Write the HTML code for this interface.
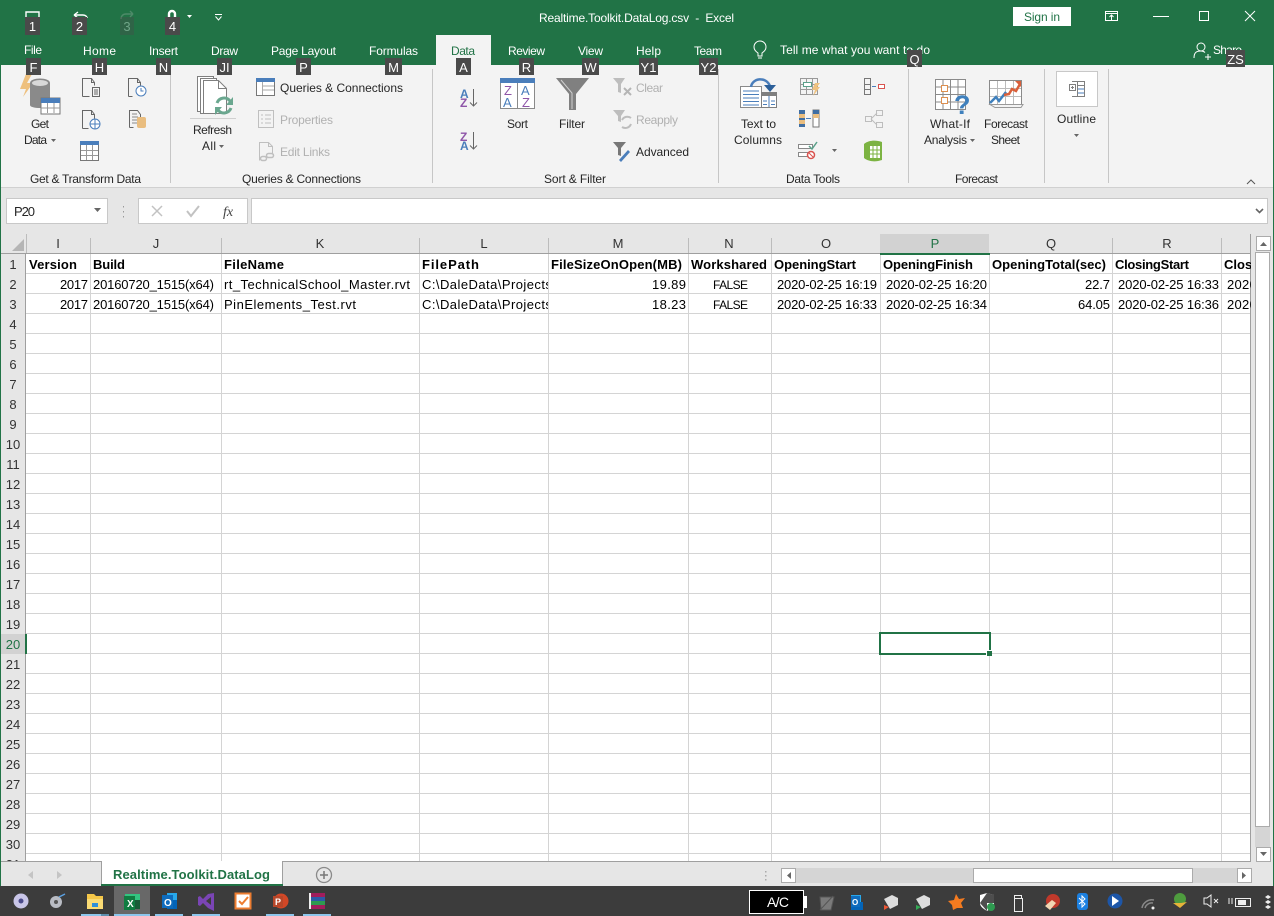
<!DOCTYPE html>
<html><head><meta charset="utf-8"><title>Realtime.Toolkit.DataLog.csv - Excel</title>
<style>
html,body{margin:0;padding:0;background:#fff;width:1274px;height:916px;overflow:hidden}
svg{display:block}
text{font-family:"Liberation Sans",sans-serif;font-size:12px;fill:#262626;white-space:pre}
.w text,text.w{fill:#fff}
.g text,text.g{fill:#b1b1b1}
.kt rect{fill:#4a4a4a}
.kt text{fill:#fff;font-size:13px;text-anchor:middle}
.c text{font-size:13px;fill:#000}
.c text.b{font-weight:bold}
.h text{font-size:13px;fill:#333;text-anchor:middle}
.r text{font-size:13px;fill:#333;text-anchor:middle}
.s{fill:none;stroke:#666;stroke-width:1}
</style></head><body>
<svg width="1274" height="916" viewBox="0 0 1274 916" xmlns="http://www.w3.org/2000/svg">
<defs>
<clipPath id="cL"><rect x="421" y="254" width="127" height="60"/></clipPath>
<clipPath id="cS"><rect x="1222" y="254" width="29" height="60"/></clipPath>
</defs>
<!-- backgrounds -->
<rect width="1274" height="916" fill="#e6e6e6"/>
<rect width="1274" height="65" fill="#217346"/>
<rect x="1" y="65" width="1272" height="122" fill="#f3f3f3"/>
<rect x="0" y="187" width="1274" height="1" fill="#d0d0d0"/>
<rect x="0" y="65" width="1" height="821" fill="#217346"/>
<rect x="1273" y="65" width="1" height="821" fill="#217346"/>
<rect x="436" y="35" width="55" height="31" fill="#f3f3f3"/>

<!-- QAT -->
<g fill="none" stroke="#fff" stroke-width="1.4">
<path d="M26 17V12H39V17"/>
<path d="M74 15l4-3M74 15l4 3M74 15h9c3 0 4 2 4 3"/>
<path d="M133 14l-3-3M133 14l-3 3M133 14h-7c-3 0-5 2-5 5" stroke="#4d8a68"/>
<path d="M169 17v-3a3 3 0 0 1 6 0v3" stroke-width="2.4"/>
</g>
<path d="M187 15h5l-2.500 3z" fill="#fff"/>
<path d="M215 14.500h7M215.500 16.500l3 3.500 3-3.500" fill="none" stroke="#fff"/>

<!-- title -->
<text class="w" x="539" y="22" textLength="195" lengthAdjust="spacing">Realtime.Toolkit.DataLog.csv  -  Excel</text>
<rect x="1013" y="7" width="58" height="19" fill="#fff"/>
<text x="1024" y="21" textLength="36" lengthAdjust="spacing" style="fill:#217346">Sign in</text>
<g fill="none" stroke="#fff">
<rect x="1105.500" y="11.500" width="12" height="9"/>
<path d="M1105 13.500h13M1111.500 20v-5M1109.500 17l2-2 2 2"/>
<path d="M1199.500 11.500h9v9h-9z"/>
<path d="M1245 11l10 10M1255 11l-10 10"/>
<circle cx="1201" cy="47" r="4"/>
<path d="M1194 58c0-6 3-7 7-7 2 0 3 .5 4 1.500M1205 57h6M1208 54v6"/>
</g>
<rect x="1153" y="16" width="16" height="1" fill="#fff"/>

<!-- tabs -->
<g class="w">
<text x="24" y="54" textLength="18" lengthAdjust="spacing">File</text>
<text x="83" y="55" textLength="33" lengthAdjust="spacing">Home</text>
<text x="149" y="55" textLength="29" lengthAdjust="spacing">Insert</text>
<text x="211" y="55" textLength="27" lengthAdjust="spacing">Draw</text>
<text x="271" y="55" textLength="65" lengthAdjust="spacing">Page Layout</text>
<text x="369" y="55" textLength="49" lengthAdjust="spacing">Formulas</text>
<text x="508" y="55" textLength="37" lengthAdjust="spacing">Review</text>
<text x="578" y="55" textLength="25" lengthAdjust="spacing">View</text>
<text x="636" y="55" textLength="25" lengthAdjust="spacing">Help</text>
<text x="694" y="55" textLength="28" lengthAdjust="spacing">Team</text>
<text x="780" y="54" textLength="150" lengthAdjust="spacing">Tell me what you want to do</text>
<text x="1213" y="54" textLength="29" lengthAdjust="spacing">Share</text>
</g>
<text x="451" y="55" textLength="24" lengthAdjust="spacing" style="fill:#217346">Data</text>
<g fill="none" stroke="#fff">
<path d="M758 53c-3-2-4-4-4-6a6 6 0 0 1 12 0c0 2-1 4-4 6v3h-4zM758 58h4"/>
</g>

<!-- separators -->
<g fill="#c6c6c6">
<rect x="170" y="69" width="1" height="114"/><rect x="432" y="69" width="1" height="114"/>
<rect x="718" y="69" width="1" height="114"/><rect x="908" y="69" width="1" height="114"/>
<rect x="1044" y="69" width="1" height="114"/><rect x="1108" y="69" width="1" height="114"/>
<rect x="190" y="118" width="46" height="1" fill="#d0d0d0"/>
</g>

<!-- Get data icon -->
<path d="M32 74h-6l-6 15h6l-3 8 10-14h-6z" fill="#eec07e"/>
<path d="M30 83c0-6 20-6 20 0v22c0 4-20 4-20 0z" fill="#8a8a8a"/>
<ellipse cx="40" cy="83" rx="8" ry="3" fill="#d8d8d8"/>
<rect x="41" y="98" width="19" height="16" fill="#fff" stroke="#777"/>
<rect x="41" y="98" width="19" height="5" fill="#4a7ebb"/>
<path d="M41 108h19M47.500 103v10M54 103v10" stroke="#999" fill="none"/>
<!-- small doc icons -->
<g class="s">
<path d="M82.500 96.500v-18h9l3 4v3M82.500 96.500h7M91.500 78.500v4h3"/>
<rect x="92.500" y="87.500" width="7" height="9"/><path d="M94 90h4M94 92h4M94 94h4"/>
<path d="M128.500 96.500v-18h9l3 4v3M128.500 96.500h4M137.500 78.500v4h3"/>
<path d="M82.500 128.500v-18h9l3 4v4M82.500 128.500h6M91.500 110.500v4h3"/>
<path d="M129.500 127.500v-17h8l3 4v3M129.500 127.500h4"/>
<path d="M132 114h5M132 117h6M132 120h5M132 123h5" stroke="#888"/>
</g>
<circle cx="141" cy="91" r="5" fill="#fff" stroke="#4a7ebb"/><path d="M141 88V91h2.500" fill="none" stroke="#4a7ebb"/>
<circle cx="95" cy="124" r="5" fill="#fff" stroke="#4a7ebb"/><path d="M90 124h10M95 119v10" stroke="#4a7ebb"/>
<rect x="137" y="117" width="9" height="11" rx="2" fill="#e9bd7f"/>
<rect x="80.500" y="141.500" width="18" height="19" fill="#fff" stroke="#777"/>
<rect x="80" y="141" width="19" height="4" fill="#4a7ebb"/>
<path d="M81 150.500h17M81 155.500h17M86.500 145v15M92.500 145v15" stroke="#999" fill="none"/>

<!-- Refresh -->
<g fill="#fff" stroke="#7f7f7f">
<path d="M197.500 76.500h16v35h-16z"/><path d="M200.500 78.500h16v35h-16z"/>
<path d="M203.500 80.500h15l8 8v25h-23z"/>
</g>
<path d="M218.500 80.500v8h8" fill="none" stroke="#7f7f7f"/>
<g fill="none" stroke="#6aa78f" stroke-width="3"><path d="M217 103a7.500 7.500 0 0 1 13-2"/><path d="M231 108a7.500 7.500 0 0 1-13 2"/></g>
<path d="M233 97v8h-7zM215 115v-8h7z" fill="#6aa78f"/>
<text x="193" y="134" textLength="39" lengthAdjust="spacing">Refresh</text>
<text x="202" y="150" textLength="14" lengthAdjust="spacing">All</text>

<!-- queries icon -->
<rect x="256.500" y="78.500" width="18" height="17" fill="#fff" stroke="#777"/>
<rect x="256" y="78" width="19" height="4" fill="#4a7ebb"/>
<path d="M262.500 82v13M263 86h11M263 90h11" stroke="#aaa" fill="none"/>
<g fill="none" stroke="#bfbfbf">
<rect x="258.500" y="110.500" width="15" height="17"/><path d="M261 115h2M265 115h6M261 119h2M265 119h6M261 123h2M265 123h6"/>
<path d="M259.500 160.500v-18h9l4 4v8"/><path d="M268.500 142.500v4h4"/>
<rect x="260.500" y="156.500" width="6" height="4" rx="2" stroke-width="1.500"/><rect x="266.500" y="153.500" width="7" height="4" rx="2" stroke-width="1.500"/>
</g>
<text x="280" y="92" textLength="123" lengthAdjust="spacing">Queries &amp; Connections</text>
<g class="g">
<text x="280" y="124" textLength="53" lengthAdjust="spacing">Properties</text>
<text x="280" y="156" textLength="50" lengthAdjust="spacing">Edit Links</text>
<text x="636" y="92" textLength="27" lengthAdjust="spacing">Clear</text>
<text x="636" y="124" textLength="42" lengthAdjust="spacing">Reapply</text>
</g>

<!-- ribbon labels -->
<text x="31" y="128" textLength="18" lengthAdjust="spacing">Get</text>
<text x="24" y="144" textLength="23" lengthAdjust="spacing">Data</text>
<text x="507" y="128" textLength="21" lengthAdjust="spacing">Sort</text>
<text x="559" y="128" textLength="26" lengthAdjust="spacing">Filter</text>
<text x="636" y="156" textLength="53" lengthAdjust="spacing">Advanced</text>
<text x="741" y="128" textLength="35" lengthAdjust="spacing">Text to</text>
<text x="734" y="144" textLength="48" lengthAdjust="spacing">Columns</text>
<text x="930" y="128" textLength="40" lengthAdjust="spacing">What-If</text>
<text x="924" y="144" textLength="43" lengthAdjust="spacing">Analysis</text>
<text x="984" y="128" textLength="44" lengthAdjust="spacing">Forecast</text>
<text x="991" y="144" textLength="29" lengthAdjust="spacing">Sheet</text>
<text x="1057" y="123" textLength="39" lengthAdjust="spacing">Outline</text>
<g fill="#444">
<text x="30" y="183" textLength="111" lengthAdjust="spacing">Get &amp; Transform Data</text>
<text x="242" y="183" textLength="119" lengthAdjust="spacing">Queries &amp; Connections</text>
<text x="544" y="183" textLength="62" lengthAdjust="spacing">Sort &amp; Filter</text>
<text x="786" y="183" textLength="54" lengthAdjust="spacing">Data Tools</text>
<text x="955" y="183" textLength="43" lengthAdjust="spacing">Forecast</text>
</g>
<g fill="#666">
<path d="M51 139h5l-2.500 3zM219 145h5l-2.500 3zM970 139h5l-2.500 3zM1074 134h5l-2.500 3zM832 149h5l-2.500 3z"/>
</g>

<!-- Sort A-Z icons -->
<text x="460" y="98" style="font-size:12px;fill:#4a7ebb;font-weight:bold">A</text>
<text x="460" y="107" style="font-size:12px;fill:#8e55a8;font-weight:bold">Z</text>
<text x="460" y="141" style="font-size:12px;fill:#8e55a8;font-weight:bold">Z</text>
<text x="460" y="150" style="font-size:12px;fill:#4a7ebb;font-weight:bold">A</text>
<path d="M473.500 89v17M470 102.500l3.500 3.500 3.500-3.500M473.500 132v17M470 145.500l3.500 3.500 3.500-3.500" fill="none" stroke="#666"/>
<rect x="500.500" y="78.500" width="34" height="30" fill="#fff" stroke="#8a8a8a"/>
<rect x="500" y="78" width="35" height="5" fill="#4a7ebb"/>
<rect x="517" y="83" width="1" height="25" fill="#8a8a8a"/>
<text x="504" y="95" style="font-size:13px;fill:#8e55a8">Z</text><text x="503" y="107" style="font-size:13px;fill:#4a7ebb">A</text>
<text x="521" y="95" style="font-size:13px;fill:#4a7ebb">A</text><text x="522" y="107" style="font-size:13px;fill:#8e55a8">Z</text>
<!-- Filter -->
<path d="M556 78h33l-13 16v16h-7V94z" fill="#808080"/>
<path d="M561 80l11 13v16" fill="none" stroke="#d0d0d0"/>
<path d="M613 78h12l-4 6v9l-3-1v-8z" fill="#bdbdbd"/>
<path d="M624 88l7 7M631 88l-7 7" stroke="#b5b5b5" stroke-width="2"/>
<path d="M613 110h12l-4 6v6l-3-1v-5z" fill="#bdbdbd"/>
<path d="M622 120a6 6 0 0 1 9-2M631 124a6 6 0 0 1-9 3" fill="none" stroke="#bdbdbd" stroke-width="2"/>
<path d="M613 142h13l-5 6v8l-3-1v-7z" fill="#777"/>
<path d="M619 160l9-10 2 2-9 10z" fill="#4a7ebb"/>

<!-- text to columns -->
<rect x="740.500" y="86.500" width="21" height="21" fill="#fff" stroke="#8a8a8a"/>
<path d="M743 91h16M743 94.500h16M743 98h16M743 101.500h16M743 105h16" stroke="#4a7ebb"/>
<rect x="761.500" y="92.500" width="15" height="15" fill="#fff" stroke="#7f7f7f"/>
<rect x="761" y="92" width="16" height="4" fill="#7f7f7f"/>
<path d="M769 96v11M763 101h4M771 101h4M763 104.500h4M771 104.500h4" stroke="#4a7ebb"/>
<path d="M751 87c1-9 15-11 19-1" fill="none" stroke="#4a7ebb" stroke-width="2.500"/>
<path d="M764 85l6 7 6-7z" fill="#2b5f99"/>
<!-- data tools -->
<g fill="none" stroke="#999">
<path d="M800.500 78.500h17v16h-17zM800.500 84.500h17M800.500 89.500h17M806.500 78.500v16M812.500 78.500v16"/>
</g>
<rect x="803.500" y="82.500" width="8" height="4" fill="#fff" stroke="#5aa08a"/>
<path d="M815 83h5l-3 4h3l-7 9 2-6h-3z" fill="#efc27f"/>
<rect x="799" y="110" width="6" height="17" fill="#e9bd7f"/><path d="M799 110h6v4h-6zM799 118h6v2h-6zM799 124h6v3h-6z" fill="#3f6ea3"/>
<rect x="813" y="110" width="6" height="17" fill="#fff" stroke="#777"/><path d="M813 110h6v4h-6z" fill="#3f6ea3"/><path d="M813 114h6v4h-6z" fill="#e9bd7f"/>
<path d="M806 118.500h5" stroke="#4a7ebb"/>
<rect x="798.500" y="144.500" width="14" height="4" fill="#fff" stroke="#888"/><rect x="798.500" y="152.500" width="11" height="4" fill="#fff" stroke="#888"/>
<path d="M809 146l3 3 5-7" fill="none" stroke="#5aa08a" stroke-width="1.500"/>
<circle cx="811" cy="155" r="3.500" fill="#fff" stroke="#d9534f" stroke-width="1.500"/>
<path d="M808.500 152.500l5 5" stroke="#d9534f"/>
<path d="M864.500 78.500h6v16h-6zM864.500 84.500h6M864.500 89.500h6" fill="none" stroke="#777"/>
<path d="M872 86.500h4" stroke="#4a7ebb"/>
<rect x="878.500" y="84.500" width="6" height="4" fill="#fff" stroke="#d9534f"/>
<g fill="none" stroke="#bdbdbd"><rect x="865.500" y="116.500" width="6" height="5"/><rect x="876.500" y="110.500" width="6" height="5"/><rect x="876.500" y="122.500" width="6" height="5"/><path d="M871 119l6-6M871 119l6 6"/></g>
<path d="M864 144c5-4 12-4 18-2v18c-6 2-13 2-18-2z" fill="#7cb342"/>
<path d="M870 146h10v12h-10z" fill="#fff"/><path d="M873 146v12M877 146v12M870 150h10M870 154h10" stroke="#7cb342"/>
<!-- what if -->
<g fill="none" stroke="#8a8a8a">
<path d="M935.500 79.500h30v30h-30z" fill="#fff"/>
<path d="M943 79.500v30M950.500 79.500v30M958 79.500v30M935.500 87h30M935.500 94.500h30M935.500 102h30"/>
</g>
<rect x="941.500" y="85.500" width="6" height="6" fill="#fff" stroke="#dd8f4f"/><rect x="941.500" y="97.500" width="6" height="6" fill="#fff" stroke="#dd8f4f"/>
<text x="954" y="114" style="font-size:27px;font-weight:bold;fill:#3f80bd">?</text>
<!-- forecast -->
<rect x="989.500" y="80.500" width="32" height="24" fill="#fff" stroke="#8a8a8a"/>
<path d="M997.500 81v23M1005.500 81v23M1013.500 81v23M990 88.500h31M990 96.500h31" stroke="#bbb"/>
<path d="M990 103l6-6 3 4 7-9" fill="none" stroke="#3f80bd" stroke-width="2.500"/>
<path d="M1004 95l5-1 3-5 4 2 4-7" fill="none" stroke="#d9603b" stroke-width="2.500"/>
<path d="M1015 81h6v6z" fill="#d9603b"/>
<path d="M990 104.500h33l-2 3h-8l-2 0h-6l-2 0h-8z" fill="none" stroke="#999"/>
<!-- outline -->
<rect x="1056.500" y="71.500" width="41" height="35" fill="#fff" stroke="#c8c8c8"/>
<g fill="none" stroke="#7f7f7f"><rect x="1069.500" y="84.500" width="6" height="6"/><rect x="1077.500" y="81.500" width="7" height="15"/><path d="M1072 81.500h5M1072 96.500h5M1071 87.500h3M1072.500 86v3M1078 85.500h6"/></g>
<path d="M1078 89h6M1078 93h6" stroke="#4a7ebb"/>
<path d="M1247 184l4-4 4 4" fill="none" stroke="#555"/>

<!-- formula bar -->
<rect x="6.500" y="198.500" width="101" height="25" fill="#fff" stroke="#c8c8c8"/>
<text x="14" y="216" textLength="21" lengthAdjust="spacing" style="font-size:13px">P20</text>
<path d="M94 208h7l-3.500 4z" fill="#666"/>
<path d="M123 206h1v1.500h-1zM123 211h1v1.500h-1zM123 216h1v1.500h-1z" fill="#999"/>
<rect x="138.500" y="198.500" width="109" height="25" fill="#fff" stroke="#c8c8c8"/>
<path d="M152 206l10 10M162 206l-10 10" stroke="#c2c2c2" stroke-width="1.500"/>
<path d="M187 211l4 5 8-10" fill="none" stroke="#c2c2c2" stroke-width="2"/>
<text x="223" y="216" style="font-family:'Liberation Serif',serif;font-style:italic;font-size:14px;fill:#444">fx</text>
<rect x="251.500" y="198.500" width="1016" height="25" fill="#fff" stroke="#c8c8c8"/>
<path d="M1256 209l3.500 3.500 3.500-3.500" fill="none" stroke="#666" stroke-width="1.600"/>

<!-- grid -->
<rect x="26" y="254" width="1225" height="607" fill="#fff"/>
<rect x="1" y="234" width="1250" height="20" fill="#e6e6e6"/>
<rect x="1" y="254" width="25" height="607" fill="#e6e6e6"/>
<path d="M22 237v12h-12z" fill="#b5b5b5" transform="translate(2 2)"/>
<rect x="880" y="234" width="109" height="19" fill="#d2d2d2"/>
<rect x="1" y="634" width="25" height="20" fill="#d2d2d2"/>
<g fill="#d4d4d4">
<rect x="26" y="273" width="1225" height="1"/><rect x="26" y="293" width="1225" height="1"/><rect x="26" y="313" width="1225" height="1"/><rect x="26" y="333" width="1225" height="1"/><rect x="26" y="353" width="1225" height="1"/><rect x="26" y="373" width="1225" height="1"/><rect x="26" y="393" width="1225" height="1"/><rect x="26" y="413" width="1225" height="1"/><rect x="26" y="433" width="1225" height="1"/><rect x="26" y="453" width="1225" height="1"/><rect x="26" y="473" width="1225" height="1"/><rect x="26" y="493" width="1225" height="1"/><rect x="26" y="513" width="1225" height="1"/><rect x="26" y="533" width="1225" height="1"/><rect x="26" y="553" width="1225" height="1"/><rect x="26" y="573" width="1225" height="1"/><rect x="26" y="593" width="1225" height="1"/><rect x="26" y="613" width="1225" height="1"/><rect x="26" y="633" width="1225" height="1"/><rect x="26" y="653" width="1225" height="1"/><rect x="26" y="673" width="1225" height="1"/><rect x="26" y="693" width="1225" height="1"/><rect x="26" y="713" width="1225" height="1"/><rect x="26" y="733" width="1225" height="1"/><rect x="26" y="753" width="1225" height="1"/><rect x="26" y="773" width="1225" height="1"/><rect x="26" y="793" width="1225" height="1"/><rect x="26" y="813" width="1225" height="1"/><rect x="26" y="833" width="1225" height="1"/><rect x="26" y="853" width="1225" height="1"/>
<rect x="90" y="254" width="1" height="607"/><rect x="221" y="254" width="1" height="607"/><rect x="419" y="254" width="1" height="607"/><rect x="548" y="254" width="1" height="607"/><rect x="688" y="254" width="1" height="607"/><rect x="771" y="254" width="1" height="607"/><rect x="880" y="254" width="1" height="607"/><rect x="989" y="254" width="1" height="607"/><rect x="1112" y="254" width="1" height="607"/><rect x="1221" y="254" width="1" height="607"/>
</g>
<!-- header separators -->
<g fill="#bcbcbc">
<rect x="26" y="234" width="1" height="20"/><rect x="90" y="238" width="1" height="15"/><rect x="221" y="238" width="1" height="15"/><rect x="419" y="238" width="1" height="15"/><rect x="548" y="238" width="1" height="15"/><rect x="688" y="238" width="1" height="15"/><rect x="771" y="238" width="1" height="15"/><rect x="1112" y="238" width="1" height="15"/><rect x="1221" y="238" width="1" height="15"/>
</g>
<rect x="1" y="253" width="1250" height="1" fill="#9f9f9f"/>
<rect x="25" y="254" width="1" height="607" fill="#9f9f9f"/>
<rect x="880" y="253" width="110" height="2" fill="#217346"/>
<rect x="25" y="634" width="2" height="20" fill="#217346"/>
<rect x="1250" y="234" width="1" height="627" fill="#9f9f9f"/>

<g class="h">
<text x="58" y="248">I</text><text x="156" y="248">J</text><text x="320" y="248">K</text><text x="484" y="248">L</text><text x="618" y="248">M</text><text x="729" y="248">N</text><text x="826" y="248">O</text><text x="935" y="248" style="fill:#217346">P</text><text x="1051" y="248">Q</text><text x="1167" y="248">R</text>
</g>
<g class="r">
<text x="13" y="269">1</text><text x="13" y="289">2</text><text x="13" y="309">3</text><text x="13" y="329">4</text><text x="13" y="349">5</text><text x="13" y="369">6</text><text x="13" y="389">7</text><text x="13" y="409">8</text><text x="13" y="429">9</text><text x="13" y="449">10</text><text x="13" y="469">11</text><text x="13" y="489">12</text><text x="13" y="509">13</text><text x="13" y="529">14</text><text x="13" y="549">15</text><text x="13" y="569">16</text><text x="13" y="589">17</text><text x="13" y="609">18</text><text x="13" y="629">19</text><text x="13" y="649" style="fill:#217346">20</text><text x="13" y="669">21</text><text x="13" y="689">22</text><text x="13" y="709">23</text><text x="13" y="729">24</text><text x="13" y="749">25</text><text x="13" y="769">26</text><text x="13" y="789">27</text><text x="13" y="809">28</text><text x="13" y="829">29</text><text x="13" y="849">30</text><text x="13" y="869">31</text>
</g>
<!-- cells -->
<g class="c">
<text class="b" x="29" y="269" textLength="48" lengthAdjust="spacing">Version</text>
<text class="b" x="93" y="269" textLength="32" lengthAdjust="spacing">Build</text>
<text class="b" x="224" y="269" textLength="60" lengthAdjust="spacing">FileName</text>
<text class="b" x="422" y="269" textLength="57" lengthAdjust="spacing">FilePath</text>
<text class="b" x="551" y="269" textLength="131" lengthAdjust="spacing">FileSizeOnOpen(MB)</text>
<text class="b" x="691" y="269" textLength="76" lengthAdjust="spacing">Workshared</text>
<text class="b" x="774" y="269" textLength="82" lengthAdjust="spacing">OpeningStart</text>
<text class="b" x="883" y="269" textLength="90" lengthAdjust="spacing">OpeningFinish</text>
<text class="b" x="992" y="269" textLength="114" lengthAdjust="spacing">OpeningTotal(sec)</text>
<text class="b" x="1115" y="269" textLength="74" lengthAdjust="spacing">ClosingStart</text>
<text class="b" x="1224" y="269" clip-path="url(#cS)">Closing</text>

<text x="60" y="289" textLength="28" lengthAdjust="spacing">2017</text>
<text x="93" y="289" textLength="121" lengthAdjust="spacing">20160720_1515(x64)</text>
<text x="224" y="289" textLength="186" lengthAdjust="spacing">rt_TechnicalSchool_Master.rvt</text>
<text x="422" y="289" clip-path="url(#cL)" style="letter-spacing:.45px">C:\DaleData\Projects\Revit</text>
<text x="652" y="289" textLength="34" lengthAdjust="spacing">19.89</text>
<text x="713" y="289" textLength="35" lengthAdjust="spacing" style="font-size:12px">FALSE</text>
<text x="777" y="289" textLength="100" lengthAdjust="spacing">2020-02-25 16:19</text>
<text x="886" y="289" textLength="101" lengthAdjust="spacing">2020-02-25 16:20</text>
<text x="1085" y="289" textLength="25" lengthAdjust="spacing">22.7</text>
<text x="1118" y="289" textLength="101" lengthAdjust="spacing">2020-02-25 16:33</text>
<text x="1227" y="289" clip-path="url(#cS)" style="letter-spacing:.3px">2020-02-25</text>

<text x="60" y="309" textLength="28" lengthAdjust="spacing">2017</text>
<text x="93" y="309" textLength="121" lengthAdjust="spacing">20160720_1515(x64)</text>
<text x="224" y="309" textLength="132" lengthAdjust="spacing">PinElements_Test.rvt</text>
<text x="422" y="309" clip-path="url(#cL)" style="letter-spacing:.45px">C:\DaleData\Projects\Revit</text>
<text x="652" y="309" textLength="34" lengthAdjust="spacing">18.23</text>
<text x="713" y="309" textLength="35" lengthAdjust="spacing" style="font-size:12px">FALSE</text>
<text x="777" y="309" textLength="100" lengthAdjust="spacing">2020-02-25 16:33</text>
<text x="886" y="309" textLength="101" lengthAdjust="spacing">2020-02-25 16:34</text>
<text x="1078" y="309" textLength="32" lengthAdjust="spacing">64.05</text>
<text x="1118" y="309" textLength="101" lengthAdjust="spacing">2020-02-25 16:36</text>
<text x="1227" y="309" clip-path="url(#cS)" style="letter-spacing:.3px">2020-02-25</text>
</g>
<!-- selection -->
<rect x="880" y="633" width="110" height="21" fill="none" stroke="#217346" stroke-width="2"/>
<rect x="986" y="650" width="6" height="6" fill="#fff"/>
<rect x="987" y="651" width="5" height="5" fill="#217346"/>

<!-- v scrollbar -->
<rect x="1251" y="234" width="22" height="627" fill="#e6e6e6"/>
<rect x="1255.500" y="252.500" width="14" height="574" fill="#fff" stroke="#ababab"/>
<rect x="1255" y="827" width="15" height="20" fill="#d5d5d5"/>
<rect x="1256.500" y="236.500" width="14" height="14" fill="#fff" stroke="#ababab"/>
<rect x="1256.500" y="847.500" width="14" height="14" fill="#fff" stroke="#ababab"/>
<path d="M1260 246l3.500-4 3.500 4zM1260 852h7l-3.500 4z" fill="#666"/>

<!-- sheet bar -->
<rect x="1" y="861" width="1250" height="1" fill="#9f9f9f"/>
<rect x="1" y="862" width="1272" height="24" fill="#e6e6e6"/>
<rect x="101" y="861" width="182" height="25" fill="#fff"/>
<rect x="101" y="861" width="1" height="25" fill="#9f9f9f"/><rect x="282" y="861" width="1" height="25" fill="#9f9f9f"/>
<rect x="101" y="884" width="182" height="2" fill="#217346"/>
<text x="113" y="879" textLength="157" lengthAdjust="spacing" style="font-weight:bold;font-size:13px;fill:#217346">Realtime.Toolkit.DataLog</text>
<path d="M33 871v8l-5-4zM57 871v8l5-4z" fill="#c4c4c4"/>
<circle cx="324" cy="875" r="7.500" fill="none" stroke="#8a8a8a" stroke-width="1.300"/>
<path d="M320 875h8M324 871v8" stroke="#777" stroke-width="1.500"/>
<path d="M765 871h1.500v1.500H765zM765 875h1.500v1.500H765zM765 879h1.500v1.500H765z" fill="#aaa"/>
<rect x="795" y="868" width="442" height="15" fill="#d5d5d5"/>
<rect x="781.500" y="868.500" width="14" height="14" fill="#fff" stroke="#ababab"/>
<rect x="1237.500" y="868.500" width="14" height="14" fill="#fff" stroke="#ababab"/>
<rect x="973.500" y="868.500" width="219" height="14" fill="#fff" stroke="#ababab"/>
<path d="M791 872v7l-4-3.500zM1242 872v7l4-3.500z" fill="#666"/>

<!-- taskbar -->
<rect x="0" y="886" width="1274" height="30" fill="#3c3c3c"/>
<rect x="114" y="886" width="36" height="30" fill="#686868"/>
<g fill="#8dc6ec">
<rect x="81" y="914" width="23" height="2"/><rect x="101" y="914" width="8" height="2" fill="#5f8fae"/><rect x="114" y="914" width="36" height="2"/><rect x="155" y="914" width="28" height="2"/><rect x="192" y="914" width="28" height="2"/><rect x="266" y="914" width="28" height="2"/><rect x="303" y="914" width="28" height="2"/>
</g>
<circle cx="21" cy="901" r="7.500" fill="#c9c6e8"/><circle cx="21" cy="901" r="2.500" fill="#4a4a8a"/>
<ellipse cx="56" cy="902" rx="6" ry="6" fill="#b9bcc4"/><circle cx="56" cy="902" r="2" fill="#555"/><path d="M59 897l6-3" stroke="#5aa0e0" stroke-width="1.500"/>
<path d="M87 894h7l2 2h7v6H87z" fill="#f5c748"/><path d="M87 899h16v10H87z" fill="#fadb74"/><path d="M92 903h6v4h-6z" fill="#2f8fd8"/>
<rect x="125" y="894" width="15" height="15" fill="#33c481"/><rect x="131" y="900" width="9" height="9" fill="#185c37"/>
<rect x="124" y="896" width="11" height="14" fill="#107c41"/>
<text x="127" y="907" style="font-size:10px;font-weight:bold;fill:#fff">X</text>
<rect x="167" y="893" width="10" height="7" fill="#28a8ea"/><rect x="167" y="900" width="10" height="9" fill="#0364b8"/><rect x="162" y="895" width="11" height="13" fill="#0f6cbd"/>
<text x="164" y="906" style="font-size:10px;font-weight:bold;fill:#fff">O</text>
<path d="M214 893v18l-6-3-5-5-3 3-2-1v-8l2-1 3 3 5-5zM211 897l-5 4 5 4z" fill="#7a45b5"/>
<rect x="235.500" y="893.500" width="15" height="15" fill="#fff" stroke="#ed7d31" stroke-width="2"/>
<path d="M239 901l3 3 6-7" fill="none" stroke="#ed7d31" stroke-width="2"/>
<circle cx="281" cy="901" r="7.500" fill="#d24726"/><rect x="273" y="896" width="10" height="11" fill="#b7472a"/>
<text x="275" y="905" style="font-size:9px;font-weight:bold;fill:#fff">P</text>
<rect x="310" y="893" width="15" height="4" fill="#a11d5c"/><rect x="310" y="897" width="15" height="4" fill="#2c5aa8"/><rect x="310" y="901" width="15" height="4" fill="#2e9a50"/><rect x="310" y="905" width="15" height="4" fill="#a11d5c"/>
<path d="M310 893v16" stroke="#eee" stroke-width="2"/>

<!-- tray -->
<rect x="749.500" y="890.500" width="54" height="23" fill="#000" stroke="#fff"/>
<rect x="804" y="896" width="3" height="12" fill="#fff"/>
<text x="767" y="907" class="w" textLength="22" lengthAdjust="spacing" style="font-size:14px">A/C</text>
<path d="M820 897h14l-3 13h-10zM820 910l13-14" fill="#7a7a7a" stroke="#555"/>
<rect x="851" y="895" width="10" height="7" fill="#28a8ea"/><rect x="851" y="902" width="12" height="8" fill="#0364b8"/><rect x="851" y="896" width="9" height="11" fill="#0f6cbd"/>
<text x="852" y="905" style="font-size:8px;fill:#fff;font-weight:bold">O</text>
<path d="M884 899l8-4 6 3v7l-8 4z" fill="#ddd"/><path d="M884 905l5 2-5 3z" fill="#e53"/>
<path d="M916 899l8-4 6 3v7l-8 4z" fill="#ddd"/><path d="M916 905l5 2-5 3z" fill="#3a5"/>
<path d="M948 901l6-1 2-6 3 5 6-1-4 5 2 5h-6l-4 2-1-5z" fill="#f47b20"/>
<path d="M980 895l7-2 7 2v8c0 4-4 6-7 8-3-2-7-4-7-8z" fill="#fff"/><path d="M987 893v18l-7-8zM987 903h7v-8l-7-2z" fill="#222" opacity=".8"/><circle cx="991" cy="907" r="4" fill="#2e9a50"/>
<rect x="1014.500" y="895.500" width="7" height="3" fill="none" stroke="#eee"/><rect x="1014.500" y="898.500" width="8" height="13" fill="none" stroke="#eee"/>
<circle cx="1053" cy="901" r="7" fill="#c0392b"/><path d="M1045 906l7-6 4 3-6 7z" fill="#f2d6b3"/>
<rect x="1077" y="893" width="11" height="17" rx="3" fill="#1c80e0"/><path d="M1079 898l6 6-3 3v-11l3 3-6 5" fill="none" stroke="#fff"/>
<circle cx="1115" cy="901" r="7.500" fill="#1d56a8"/><path d="M1112 896l7 5-7 5z" fill="#fff"/>
<path d="M1142 908a10 10 0 0 1 12-8M1145 908a7 7 0 0 1 8-5" fill="none" stroke="#888" stroke-width="1.500"/><circle cx="1153" cy="908" r="1.500" fill="#eee"/>
<circle cx="1180" cy="899" r="6" fill="#4e9c3e"/><path d="M1173 903l7 5 7-6-6 1z" fill="#e5b33a"/>
<path d="M1204 898h3l4-3v12l-4-3h-3z" fill="none" stroke="#eee"/><path d="M1214 899l4 4M1218 899l-4 4" stroke="#eee"/>
<rect x="1235.500" y="898.500" width="15" height="8" fill="none" stroke="#eee"/><rect x="1238" y="900" width="8" height="5" fill="#eee"/><path d="M1229 898v6M1232 898v6" stroke="#eee"/>
<path d="M1265 897l3-2 3 2-3 2zM1265 902l3-2 3 2-3 2zM1265 907l3-2 3 2-3 2z" fill="#eee"/>

<!-- key tips -->
<g class="kt">
<rect x="25" y="17" width="15" height="18"/><text x="32.500" y="31">1</text>
<rect x="72" y="17" width="15" height="18"/><text x="79.500" y="31">2</text>
<g opacity=".35"><rect x="120" y="17" width="14" height="18"/><text x="127" y="31">3</text></g>
<rect x="165" y="17" width="15" height="18"/><text x="172.500" y="31">4</text>
<rect x="26" y="58" width="15" height="17"/><text x="33.500" y="72">F</text>
<rect x="92" y="58" width="15" height="17"/><text x="99.500" y="72">H</text>
<rect x="156" y="58" width="15" height="17"/><text x="163.500" y="72">N</text>
<rect x="217" y="58" width="15" height="17"/><text x="224.500" y="72">JI</text>
<rect x="296" y="58" width="15" height="17"/><text x="303.500" y="72">P</text>
<rect x="385" y="58" width="17" height="17"/><text x="393.500" y="72">M</text>
<rect x="456" y="58" width="15" height="17"/><text x="463.500" y="72">A</text>
<rect x="519" y="58" width="15" height="17"/><text x="526.500" y="72">R</text>
<rect x="582" y="58" width="17" height="17"/><text x="590.500" y="72">W</text>
<rect x="639" y="58" width="19" height="17"/><text x="648.500" y="72">Y1</text>
<rect x="699" y="58" width="19" height="17"/><text x="708.500" y="72">Y2</text>
<rect x="907" y="50" width="15" height="17"/><text x="914.500" y="64">Q</text>
<rect x="1226" y="50" width="19" height="17"/><text x="1235.500" y="64">ZS</text>
</g>
</svg>
</body></html>
